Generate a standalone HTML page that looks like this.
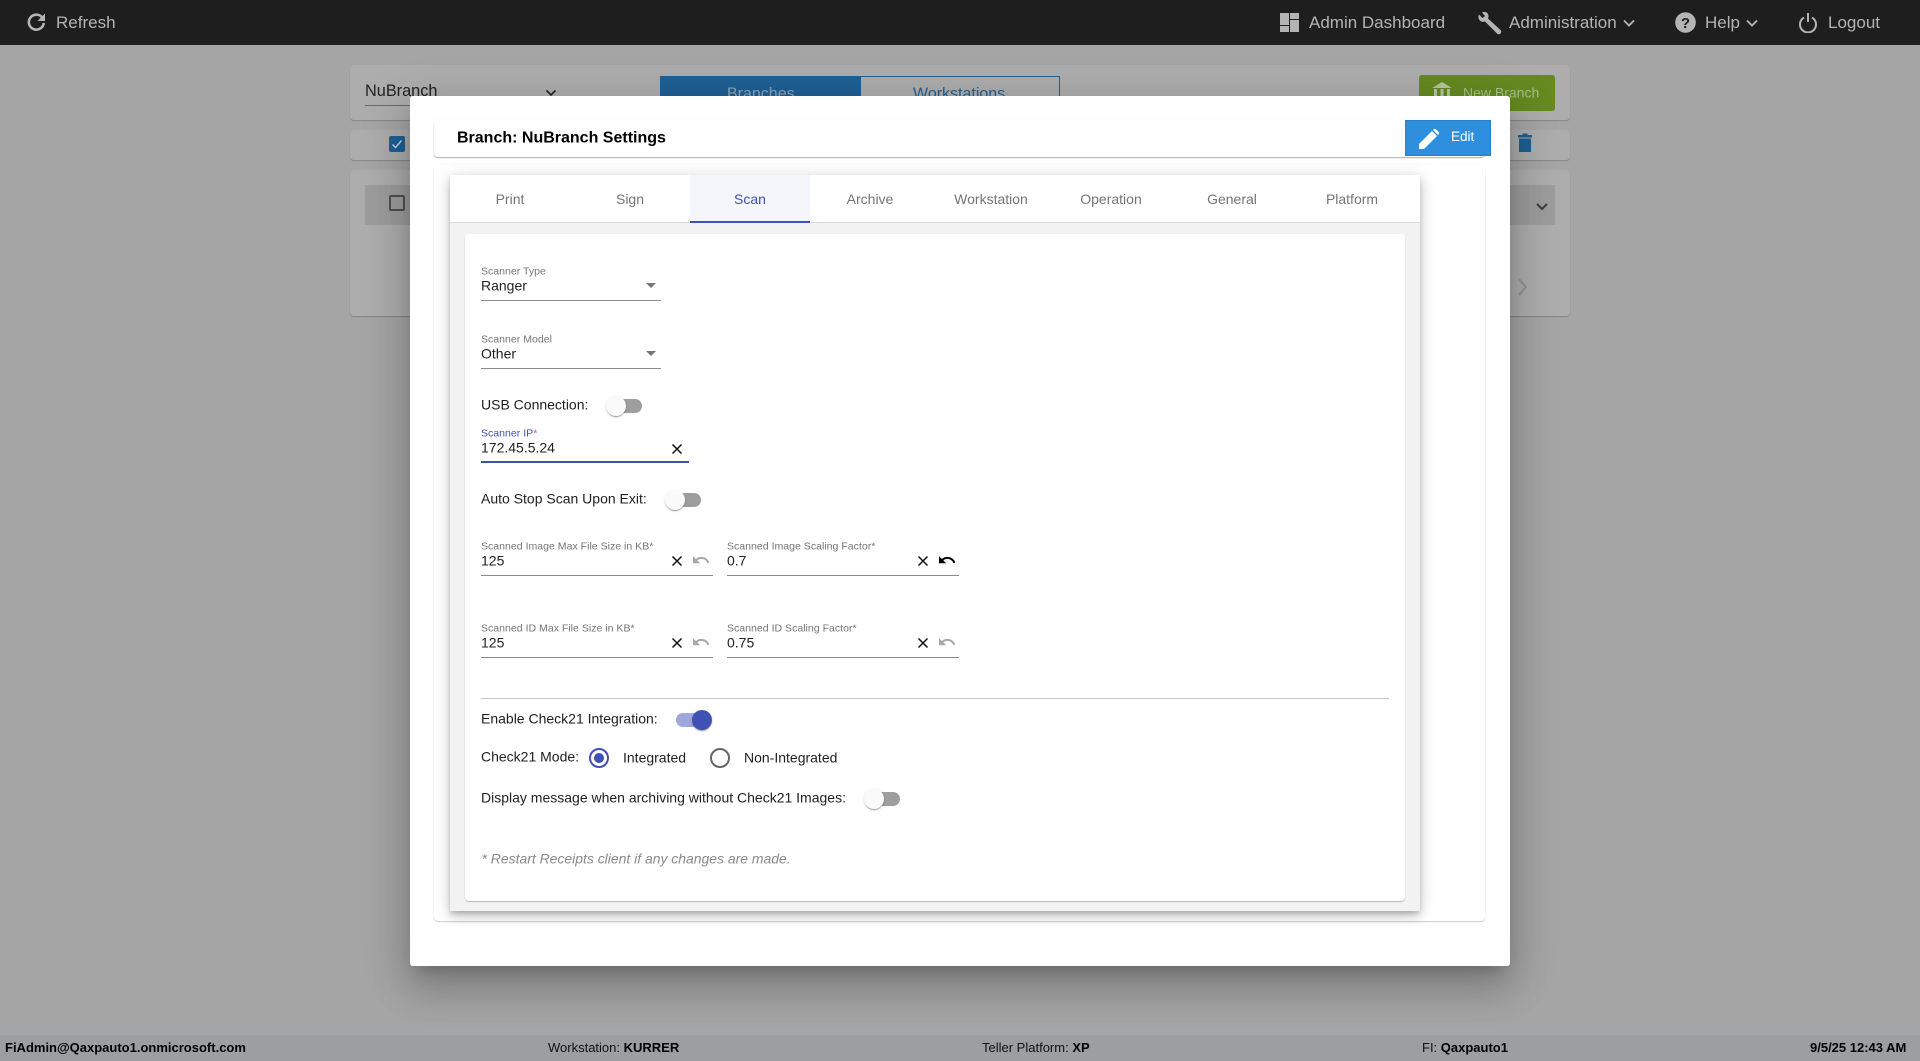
<!DOCTYPE html>
<html><head><meta charset="utf-8"><title>Branch Settings</title>
<style>
*{box-sizing:border-box}
html,body{margin:0;padding:0;width:1920px;height:1061px;overflow:hidden}
body{background:#a5a5a5;font-family:"Liberation Sans",sans-serif;position:relative;color:#1c1c1c}
.a{position:absolute;white-space:nowrap}
.t{position:absolute;white-space:nowrap;transform:translateY(-50%);line-height:1.2}
svg{position:absolute;display:block}
.hd{position:absolute;left:0;top:0;width:1920px;height:45px;background:#1e1e1e}
.nav{font-size:17px;color:#b4b4b4}
.ft{position:absolute;left:0;top:1035px;width:1920px;height:26px;background:#9c9ea0}
.f{font-size:13px;color:#111;top:1048px}
.f b{font-weight:700;color:#000}
.pn{position:absolute;left:350px;width:1220px;background:#adadad;border-radius:4px;box-shadow:0 1px 1px rgba(0,0,0,.2)}
.modal{position:absolute;left:410px;top:96px;width:1100px;height:870px;background:#fff;border-radius:3px;box-shadow:0 11px 15px -7px rgba(0,0,0,.2),0 24px 38px 3px rgba(0,0,0,.14),0 9px 46px 8px rgba(0,0,0,.12)}
.card{position:absolute;background:#fff;border-radius:4px}
.tab{position:absolute;top:175px;width:120px;height:48px;line-height:48px;text-align:center;font-size:14px;color:#757575}
.lb{font-size:10.55px;color:#757575}
.v{font-size:14px;color:#222}
.l{font-size:14px;color:#1f1f1f}
.u{position:absolute;height:1px;background:#8c8c8c}
.track{position:absolute;width:30px;height:14px;border-radius:7px;background:#9e9e9e}
.thumb{position:absolute;width:20px;height:20px;border-radius:50%;background:#fafafa;box-shadow:0 2px 1px -1px rgba(0,0,0,.2),0 1px 1px rgba(0,0,0,.14),0 1px 3px rgba(0,0,0,.12)}
</style></head><body>

<!-- background page -->
<div class="pn" style="top:65px;height:55px"></div>
<div class="t" style="left:365px;top:92px;font-size:16.3px;color:#222">NuBranch</div>
<div class="a" style="left:365px;top:105px;width:200px;height:1px;background:#6c6c6c"></div>
<svg style="left:545px;top:88px" width="12" height="10" viewBox="0 0 12 10"><path d="M1.500 2.500L6 7l4.500-4.500" fill="none" stroke="#222" stroke-width="1.600"/></svg>
<div class="a" style="left:660px;top:76px;width:200px;height:22px;background:#1f6094"></div>
<div class="a" style="left:860px;top:76px;width:200px;height:22px;border:1px solid #1f6094;border-bottom:0"></div>
<div class="t" style="left:727px;top:94px;font-size:16px;color:#8fa4b6">Branches</div>
<div class="t" style="left:913px;top:94px;font-size:16px;color:#1f6094">Workstations</div>
<div class="a" style="left:1419px;top:75px;width:136px;height:36px;background:#668a20;border-radius:3px"></div>
<svg style="left:1431px;top:80px" width="22" height="20" viewBox="0 0 22 20"><path d="M11 2L21 8H1zM3 9h3v9H3zM9.500 9h3v9h-3zM16 9h3v9h-3z" fill="#b7c4a3"/></svg>
<div class="t" style="left:1463px;top:93px;font-size:14px;color:#a9bd8e">New Branch</div>

<div class="pn" style="top:130px;height:30px"></div>
<div class="a" style="left:389px;top:136px;width:16px;height:16px;background:#1f6094;border-radius:2px"></div>
<svg style="left:389px;top:136px" width="16" height="16" viewBox="0 0 16 16"><path d="M3.500 8.500l3 3 6-7" fill="none" stroke="#c9d6e2" stroke-width="1.400"/></svg>
<svg style="left:1516px;top:132px" width="18" height="22" viewBox="0 0 18 22"><path d="M2 3h14v2.500H2zM6.500 1.500h5V3h-5zM3 6.500h12V20H3z" fill="#1f6094"/></svg>

<div class="pn" style="top:170px;height:146px"></div>
<div class="a" style="left:365px;top:185px;width:1190px;height:40px;background:#9c9c9c"></div>
<div class="a" style="left:389px;top:195px;width:16px;height:16px;border:2px solid #4f4f4f;border-radius:2px"></div>
<svg style="left:1535px;top:201px" width="14" height="12" viewBox="0 0 14 12"><path d="M2 3l5 5 5-5" fill="none" stroke="#3c3c3c" stroke-width="2"/></svg>
<svg style="left:1516px;top:277px" width="14" height="20" viewBox="0 0 14 20"><path d="M3 2l7 8-7 8" fill="none" stroke="#929292" stroke-width="2"/></svg>

<!-- header -->
<div class="hd"></div>
<svg style="left:27px;top:13px" width="19" height="20" viewBox="0 0 19 20"><path d="M15 4.200A7.500 7.500 0 1 0 16.800 10" fill="none" stroke="#b4b4b4" stroke-width="2.600"/><path d="M18 .5v7.500H10.500z" fill="#b4b4b4"/></svg>
<div class="t nav" style="left:56px;top:23px">Refresh</div>
<svg style="left:1280px;top:13px" width="19" height="19" viewBox="0 0 19 19"><path d="M0 0h9v12H0zM0 13h9v6H0zM10 0h9v6h-9zM10 7h9v12h-9z" fill="#b4b4b4"/></svg>
<div class="t nav" style="left:1309px;top:23px">Admin Dashboard</div>
<svg style="left:1477px;top:11px" width="25" height="24" viewBox="0 0 25 24"><path d="M2 3.500L5.500 7 8 5 5 1.500C8 0 11 1.500 11.500 4.500c.2 1-.2 2.200-.5 3L23.500 19c1 1 1 2.500 0 3.500s-2.500 1-3.500 0L8 10.500c-1 .3-2 .5-3 .3C2 10 .5 6.500 2 3.500z" fill="#b4b4b4"/></svg>
<div class="t nav" style="left:1509px;top:23px">Administration</div>
<svg style="left:1623px;top:18px" width="12" height="10" viewBox="0 0 12 10"><path d="M1 2.500l5 5 5-5" fill="none" stroke="#b4b4b4" stroke-width="1.900"/></svg>
<svg style="left:1675px;top:12px" width="21" height="21" viewBox="0 0 21 21"><circle cx="10.500" cy="10.500" r="10.300" fill="#b4b4b4"/><text x="10.500" y="16" text-anchor="middle" font-family="Liberation Sans" font-weight="700" font-size="15" fill="#1e1e1e">?</text></svg>
<div class="t nav" style="left:1705px;top:23px">Help</div>
<svg style="left:1746px;top:18px" width="12" height="10" viewBox="0 0 12 10"><path d="M1 2.500l5 5 5-5" fill="none" stroke="#b4b4b4" stroke-width="1.900"/></svg>
<svg style="left:1798px;top:12px" width="20" height="21" viewBox="0 0 20 21"><path d="M6 5.500a8 8 0 1 0 8 0" fill="none" stroke="#b4b4b4" stroke-width="2"/><path d="M10 1v9" stroke="#b4b4b4" stroke-width="2"/></svg>
<div class="t nav" style="left:1828px;top:23px">Logout</div>

<!-- footer -->
<div class="ft"></div>
<div class="t f" style="left:5px;font-weight:700;color:#000">FiAdmin@Qaxpauto1.onmicrosoft.com</div>
<div class="t f" style="left:548px">Workstation: <b>KURRER</b></div>
<div class="t f" style="left:982px">Teller Platform: <b>XP</b></div>
<div class="t f" style="left:1422px">FI: <b>Qaxpauto1</b></div>
<div class="t f" style="left:1810px;font-weight:700;color:#000">9/5/25 12:43 AM</div>

<!-- modal -->
<div class="modal"></div>
<div class="card" style="left:434px;top:120px;width:1051px;height:37px;box-shadow:0 1px 1px rgba(0,0,0,.3),0 0 2px rgba(0,0,0,.05)"></div>
<div class="t" style="left:457px;top:138px;font-size:16px;font-weight:700;color:#000">Branch: NuBranch Settings</div>
<div class="a" style="left:1405px;top:120px;width:86px;height:36px;background:#2f8fdf;border:1px solid #2b80c9"></div>
<svg style="left:1419px;top:128px" width="21" height="21" viewBox="0 0 21 21"><path d="M0 21v-5L13 3l5 5L5 21zM14.500 1.500c.8-.8 2-.8 2.800 0l2.200 2.200c.8.800.8 2 0 2.800L19 7l-5-5z" fill="#fff"/></svg>
<div class="t" style="left:1451px;top:137px;font-size:13.500px;color:#fff">Edit</div>

<div class="card" style="left:434px;top:165px;width:1051px;height:756px;box-shadow:0 1px 1px rgba(0,0,0,.2),0 0 2px rgba(0,0,0,.04)"></div>
<div class="a" style="left:450px;top:175px;width:970px;height:736px;background:#f2f2f2;box-shadow:0 3px 5px -1px rgba(0,0,0,.2),0 6px 10px rgba(0,0,0,.14),0 1px 18px rgba(0,0,0,.12)"></div>
<div class="a" style="left:450px;top:175px;width:970px;height:48px;background:#fff;border-bottom:1px solid #dcdcdc"></div>
<div class="a" style="left:690px;top:175px;width:120px;height:46px;background:#f5f6fb"></div>
<div class="a" style="left:690px;top:221px;width:120px;height:2px;background:#3f51b5"></div>
<div class="tab" style="left:450px">Print</div>
<div class="tab" style="left:570px">Sign</div>
<div class="tab" style="left:690px;color:#3f51b5">Scan</div>
<div class="tab" style="left:810px">Archive</div>
<div class="tab" style="left:931px">Workstation</div>
<div class="tab" style="left:1051px">Operation</div>
<div class="tab" style="left:1172px">General</div>
<div class="tab" style="left:1292px">Platform</div>

<div class="card" style="left:465px;top:234px;width:940px;height:667px;box-shadow:0 1px 1px rgba(0,0,0,.25)"></div>

<!-- form -->
<div class="t lb" style="left:481px;top:272px">Scanner Type</div>
<div class="t v" style="left:481px;top:286px">Ranger</div>
<svg style="left:646px;top:283px" width="10" height="5" viewBox="0 0 10 5"><path d="M0 0h10L5 5z" fill="#757575"/></svg>
<div class="u" style="left:481px;top:300px;width:180px"></div>

<div class="t lb" style="left:481px;top:340px">Scanner Model</div>
<div class="t v" style="left:481px;top:354px">Other</div>
<svg style="left:646px;top:351px" width="10" height="5" viewBox="0 0 10 5"><path d="M0 0h10L5 5z" fill="#757575"/></svg>
<div class="u" style="left:481px;top:368px;width:180px"></div>

<div class="t l" style="left:481px;top:405px">USB Connection:</div>
<div class="track" style="left:612px;top:399px"></div><div class="thumb" style="left:606px;top:396px"></div>

<div class="t lb" style="left:481px;top:434px;color:#3f51b5">Scanner IP<span style="color:#ff4081">*</span></div>
<div class="t v" style="left:481px;top:448px">172.45.5.24</div>
<svg style="left:671px;top:443px" width="12" height="12" viewBox="0 0 12 12"><path d="M1.500 1.500l9 9M10.500 1.500l-9 9" stroke="#111" stroke-width="1.500"/></svg>
<div class="u" style="left:481px;top:461px;width:208px;height:2px;background:#3f51b5"></div>

<div class="t l" style="left:481px;top:499px">Auto Stop Scan Upon Exit:</div>
<div class="track" style="left:671px;top:493px"></div><div class="thumb" style="left:665px;top:490px"></div>

<div class="t lb" style="left:481px;top:547px">Scanned Image Max File Size in KB*</div>
<div class="t v" style="left:481px;top:561px">125</div>
<svg style="left:671px;top:555px" width="12" height="12" viewBox="0 0 12 12"><path d="M1.500 1.500l9 9M10.500 1.500l-9 9" stroke="#111" stroke-width="1.500"/></svg>
<svg style="left:693px;top:556px" width="16" height="9" viewBox="2 7 20 11"><path d="M12.500 8c-2.650 0-5.050.99-6.900 2.600L2 7v9h9l-3.620-3.620c1.390-1.160 3.160-1.880 5.120-1.880 3.540 0 6.550 2.310 7.600 5.500l2.370-.78C21.080 11.030 17.150 8 12.500 8z" fill="#a8a8a8"/></svg>
<div class="u" style="left:481px;top:575px;width:232px"></div>

<div class="t lb" style="left:727px;top:547px">Scanned Image Scaling Factor*</div>
<div class="t v" style="left:727px;top:561px">0.7</div>
<svg style="left:917px;top:555px" width="12" height="12" viewBox="0 0 12 12"><path d="M1.500 1.500l9 9M10.500 1.500l-9 9" stroke="#111" stroke-width="1.500"/></svg>
<svg style="left:939px;top:556px" width="16" height="9" viewBox="2 7 20 11"><path d="M12.500 8c-2.650 0-5.050.99-6.900 2.600L2 7v9h9l-3.620-3.620c1.390-1.160 3.160-1.880 5.120-1.880 3.540 0 6.550 2.310 7.600 5.500l2.370-.78C21.080 11.030 17.150 8 12.500 8z" fill="#000"/></svg>
<div class="u" style="left:727px;top:575px;width:232px"></div>

<div class="t lb" style="left:481px;top:629px">Scanned ID Max File Size in KB*</div>
<div class="t v" style="left:481px;top:643px">125</div>
<svg style="left:671px;top:637px" width="12" height="12" viewBox="0 0 12 12"><path d="M1.500 1.500l9 9M10.500 1.500l-9 9" stroke="#111" stroke-width="1.500"/></svg>
<svg style="left:693px;top:638px" width="16" height="9" viewBox="2 7 20 11"><path d="M12.500 8c-2.650 0-5.050.99-6.900 2.600L2 7v9h9l-3.620-3.620c1.390-1.160 3.160-1.880 5.120-1.880 3.540 0 6.550 2.310 7.600 5.500l2.370-.78C21.080 11.030 17.150 8 12.500 8z" fill="#a8a8a8"/></svg>
<div class="u" style="left:481px;top:657px;width:232px"></div>

<div class="t lb" style="left:727px;top:629px">Scanned ID Scaling Factor*</div>
<div class="t v" style="left:727px;top:643px">0.75</div>
<svg style="left:917px;top:637px" width="12" height="12" viewBox="0 0 12 12"><path d="M1.500 1.500l9 9M10.500 1.500l-9 9" stroke="#111" stroke-width="1.500"/></svg>
<svg style="left:939px;top:638px" width="16" height="9" viewBox="2 7 20 11"><path d="M12.500 8c-2.650 0-5.050.99-6.900 2.600L2 7v9h9l-3.620-3.620c1.390-1.160 3.160-1.880 5.120-1.880 3.540 0 6.550 2.310 7.600 5.500l2.370-.78C21.080 11.030 17.150 8 12.500 8z" fill="#a8a8a8"/></svg>
<div class="u" style="left:727px;top:657px;width:232px"></div>

<div class="u" style="left:481px;top:698px;width:908px;background:#c4c4c4"></div>

<div class="t l" style="left:481px;top:719px">Enable Check21 Integration:</div>
<div class="track" style="left:676px;top:713px;background:#9fa8da;width:30px"></div><div class="thumb" style="left:692px;top:710px;background:#3f51b5"></div>

<div class="t l" style="left:481px;top:757px">Check21 Mode:</div>
<svg style="left:589px;top:748px" width="20" height="20" viewBox="0 0 20 20"><circle cx="10" cy="10" r="9" fill="none" stroke="#3f51b5" stroke-width="2"/><circle cx="10" cy="10" r="5" fill="#3f51b5"/></svg>
<div class="t l" style="left:623px;top:758px">Integrated</div>
<svg style="left:710px;top:748px" width="20" height="20" viewBox="0 0 20 20"><circle cx="10" cy="10" r="9" fill="none" stroke="#666" stroke-width="2"/></svg>
<div class="t l" style="left:744px;top:758px">Non-Integrated</div>

<div class="t l" style="left:481px;top:798px">Display message when archiving without Check21 Images:</div>
<div class="track" style="left:870px;top:792px"></div><div class="thumb" style="left:864px;top:789px"></div>

<div class="t" style="left:481.500px;top:859px;font-size:13.950px;font-style:italic;color:#8a8a8a">* Restart Receipts client if any changes are made.</div>

</body></html>
